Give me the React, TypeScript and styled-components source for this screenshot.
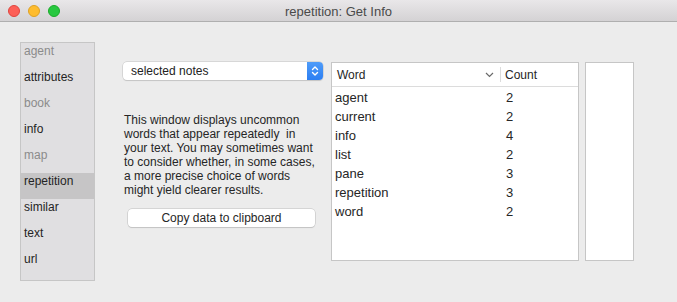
import styled, { createGlobalStyle } from "styled-components";

const GlobalStyle = createGlobalStyle`
  html, body {
    margin: 0;
    padding: 0;
    background: #ececec;
    font-family: "Liberation Sans", Arial, sans-serif;
  }
`;

const topics = [
  { name: "agent", dim: true },
  { name: "attributes" },
  { name: "book", dim: true },
  { name: "info" },
  { name: "map", dim: true },
  { name: "repetition", selected: true },
  { name: "similar" },
  { name: "text" },
  { name: "url" },
];

const words = [
  ["agent", 2],
  ["current", 2],
  ["info", 4],
  ["list", 2],
  ["pane", 3],
  ["repetition", 3],
  ["word", 2],
];

// the window is fixed width, so keep the wrap the app shows
const blurb = [
  "This window displays uncommon",
  "words that appear repeatedly\u00a0 in",
  "your text. You may sometimes want",
  "to consider whether, in some cases,",
  "a more precise choice of words",
  "might yield clearer results.",
];

const App = () => {
  return (
    <>
      <GlobalStyle />
      <Window>
        <TitleBar>
          <Lights>
            <Light color="#fd5f57" edge="#e0443e" />
            <Light color="#febc2e" edge="#dea123" />
            <Light color="#28c840" edge="#1aab29" />
          </Lights>
          <Title>repetition: Get Info</Title>
        </TitleBar>
        <Content>
          <Sidebar>
            {topics.map((t) => (
              <SideItem key={t.name} dim={t.dim} selected={t.selected}>
                {t.name}
              </SideItem>
            ))}
          </Sidebar>
          <Middle>
            <Popup>
              <PopupLabel>selected notes</PopupLabel>
              <Stepper>
                <svg width="8" height="12" viewBox="0 0 8 12">
                  <path
                    d="M1.5 4.5 L4 2 L6.5 4.5 M1.5 7.5 L4 10 L6.5 7.5"
                    fill="none"
                    stroke="#fff"
                    strokeWidth="1.4"
                    strokeLinecap="round"
                    strokeLinejoin="round"
                  />
                </svg>
              </Stepper>
            </Popup>
            <Description>
              {blurb.map((line) => (
                <Line key={line}>{line}</Line>
              ))}
            </Description>
            <CopyButton>Copy data to clipboard</CopyButton>
          </Middle>
          <Table>
            <HeaderRow>
              <HeadCell>
                Word
                <svg width="9" height="6" viewBox="0 0 9 6">
                  <path
                    d="M1 1 L4.5 4.5 L8 1"
                    fill="none"
                    stroke="#6a6a6a"
                    strokeWidth="1.2"
                  />
                </svg>
              </HeadCell>
              <HeadCell last>Count</HeadCell>
            </HeaderRow>
            <Rows>
              {words.map(([w, c]) => (
                <Row key={w}>
                  <WordCell>{w}</WordCell>
                  <CountCell>{c}</CountCell>
                </Row>
              ))}
            </Rows>
          </Table>
          <SideBox />
        </Content>
      </Window>
    </>
  );
};

const Window = styled.div`
  width: 677px;
  height: 302px;
  background: #ececec;
  overflow: hidden;
`;

const TitleBar = styled.div`
  position: relative;
  height: 21px;
  background: linear-gradient(#e9e7e9, #d4d2d4);
  border-bottom: 1px solid #afafaf;
  display: flex;
  align-items: center;
  justify-content: center;
`;

const Lights = styled.div`
  position: absolute;
  left: 8px;
  top: 5px;
  display: flex;
  gap: 8px;
`;

const Light = styled.div<{ color: string; edge: string }>`
  box-sizing: border-box;
  width: 12px;
  height: 12px;
  border-radius: 50%;
  background: ${({ color }) => color};
  border: 0.5px solid ${({ edge }) => edge};
`;

const Title = styled.div`
  font-size: 13px;
  color: #4a4a4a;
  margin-top: 1px;
`;

const Content = styled.div`
  display: flex;
  align-items: flex-start;
  padding: 20px 0 0 20px;
`;

const Sidebar = styled.div`
  width: 73px;
  height: 237px;
  background: #e0dfe1;
  border: 1px solid #c6c6c6;
  overflow: hidden;
  flex-shrink: 0;
`;

const SideItem = styled.div<{ dim?: boolean; selected?: boolean }>`
  height: 26px;
  box-sizing: border-box;
  padding: 1px 0 0 3px;
  font-size: 12px;
  line-height: 15px;
  color: ${({ dim }) => (dim ? "#8b8b8b" : "#242424")};
  background: ${({ selected }) => (selected ? "#c6c5c6" : "transparent")};
`;

const Middle = styled.div`
  width: 200px;
  margin: 20px 0 0 28px;
  display: flex;
  flex-direction: column;
`;

const Popup = styled.div`
  height: 18px;
  display: flex;
  background: #fff;
  border-radius: 4px;
  box-shadow: 0 0 0 0.5px #c2c2c2, 0 1px 1px rgba(0, 0, 0, 0.15);
  overflow: hidden;
`;

const PopupLabel = styled.div`
  flex: 1;
  font-size: 12px;
  line-height: 18px;
  padding-left: 8px;
  color: #222;
`;

const Stepper = styled.div`
  width: 16px;
  background: linear-gradient(#4f9cf9, #2c7ff2);
  display: flex;
  align-items: center;
  justify-content: center;
`;

const Description = styled.div`
  margin: 33px 0 0 1px;
  font-size: 12px;
  line-height: 14px;
  color: #262626;
`;

const Line = styled.div`
  white-space: nowrap;
`;

const CopyButton = styled.button`
  margin: 12px 0 0 5px;
  width: 187px;
  height: 18px;
  padding: 0;
  background: #fff;
  border: none;
  border-radius: 4px;
  box-shadow: 0 0 0 0.5px #bdbdbd, 0 1px 1px rgba(0, 0, 0, 0.15);
  font-family: inherit;
  font-size: 12px;
  color: #262626;
`;

const Table = styled.div`
  width: 246px;
  height: 197px;
  margin: 20px 0 0 8px;
  background: #fff;
  border: 1px solid #c6c6c6;
  flex-shrink: 0;
`;

const HeaderRow = styled.div`
  height: 23px;
  display: flex;
  border-bottom: 1px solid #dcdcdc;
`;

const HeadCell = styled.div<{ last?: boolean }>`
  display: flex;
  align-items: center;
  justify-content: space-between;
  box-sizing: border-box;
  width: ${({ last }) => (last ? "auto" : "169px")};
  flex: ${({ last }) => (last ? "1" : "none")};
  padding: 0 6px 0 ${({ last }) => (last ? "4px" : "5px")};
  margin: 4px 0;
  font-size: 12px;
  color: #262626;
  border-right: ${({ last }) => (last ? "none" : "1px solid #dcdcdc")};
`;

const Rows = styled.div`
  padding-top: 1px;
`;

const Row = styled.div`
  height: 19px;
  display: flex;
  align-items: center;
  font-size: 13px;
  color: #262626;
`;

const WordCell = styled.div`
  width: 171px;
  padding-left: 3px;
`;

const CountCell = styled.div`
  flex: 1;
`;

const SideBox = styled.div`
  width: 47px;
  height: 197px;
  margin: 20px 0 0 6px;
  background: #fff;
  border: 1px solid #c6c6c6;
  flex-shrink: 0;
`;

export default App;
